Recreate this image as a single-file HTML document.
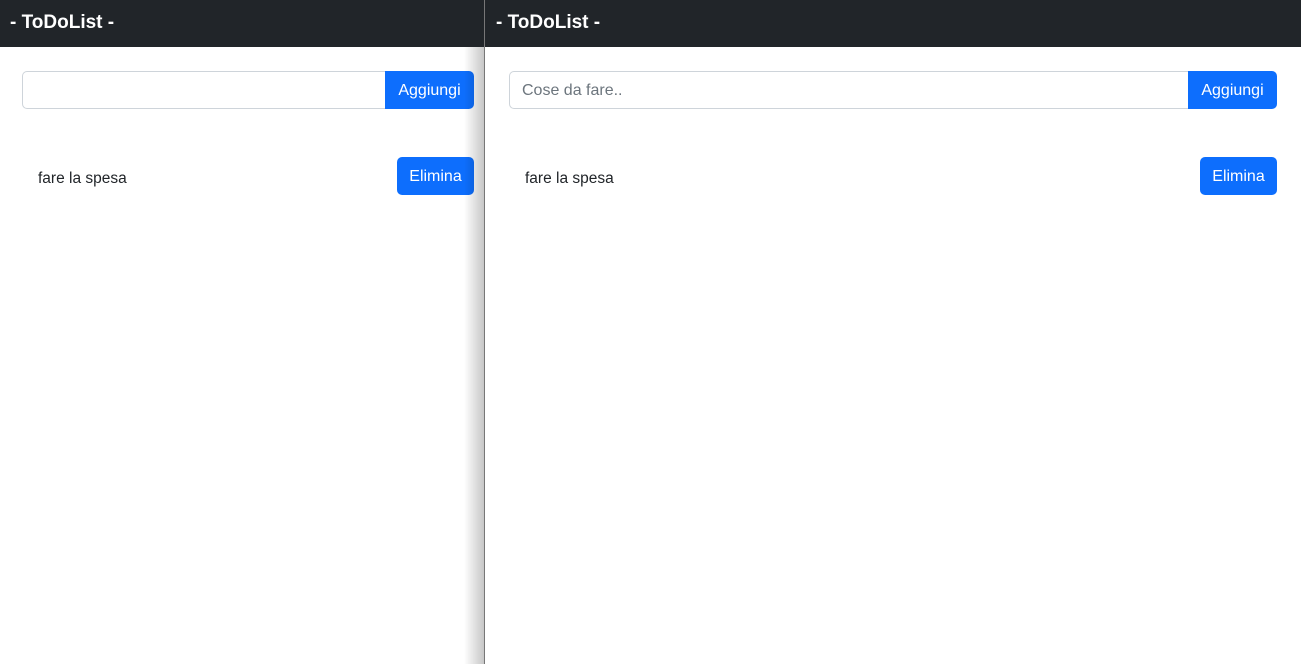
<!DOCTYPE html>
<html><head><style>
*{box-sizing:border-box;margin:0;padding:0}
body{width:1301px;height:664px;overflow:hidden;background:#fff;font-family:"Liberation Sans",sans-serif;position:relative}
.pane{position:absolute;top:0;height:664px;background:#fff}
.hdr{height:47px;background:#212529;color:#fff;font-weight:bold;font-size:19px;line-height:46px;padding-left:10px}
.in{position:absolute;top:71px;height:38px;border:1px solid #ced4da;border-radius:5px 0 0 5px;border-right:none;font-size:16px;color:#6c757d;line-height:38px;padding-left:12px}
.btn{position:absolute;background:#0d6efd;color:#fff;font-size:16px;text-align:center;line-height:40px;height:38px;border-radius:5px}
.add{top:71px;width:89px;border-radius:0 5px 5px 0}
.del{top:157px;width:77px}
.item{position:absolute;top:170px;font-size:15.5px;color:#212529}
.shadow{position:absolute;left:464px;top:47px;width:20px;height:617px;background:linear-gradient(to right,rgba(0,0,0,0),rgba(0,0,0,.22));z-index:3}
</style></head><body>
<div class="pane" style="left:0;width:484px">
<div class="hdr">- ToDoList -</div>
<div class="in" style="left:22px;width:363px"></div>
<div class="btn add" style="left:385px">Aggiungi</div>
<div class="item" style="left:38px">fare la spesa</div>
<div class="btn del" style="left:397px">Elimina</div>
</div>
<div class="shadow"></div>
<div style="position:absolute;left:484px;top:0;width:1px;height:664px;background:#777;z-index:4"></div>
<div class="pane" style="left:485px;width:816px">
<div class="hdr" style="padding-left:11px">- ToDoList -</div>
<div class="in" style="left:24px;width:679px">Cose da fare..</div>
<div class="btn add" style="left:703px">Aggiungi</div>
<div class="item" style="left:40px">fare la spesa</div>
<div class="btn del" style="left:715px">Elimina</div>
</div>
</body></html>
